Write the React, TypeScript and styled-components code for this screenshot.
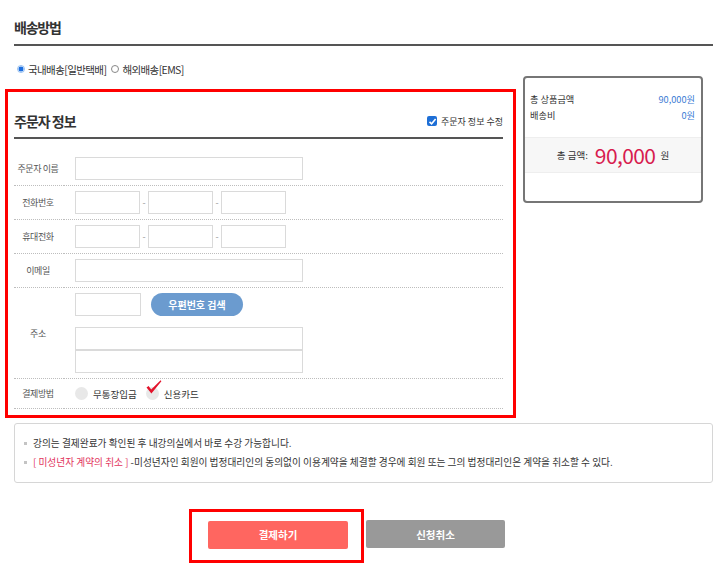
import styled, { createGlobalStyle } from 'styled-components';

const GlobalStyle = createGlobalStyle`
  * {
    box-sizing: border-box;
  }

  body {
    margin: 0;
    background: #fff;
    color: #333;
    font-family: "Noto Sans CJK KR", "Noto Sans", sans-serif;
  }
`;

const CheckGlyph = () => (
  <svg width="9" height="9" viewBox="0 0 9 9">
    <path d="M1.5 4.8 L3.6 6.8 L7.6 2" stroke="#fff" strokeWidth="1.6" fill="none" />
  </svg>
);

const App = () => {
  return (
    <StPage>
      <GlobalStyle />
      <StSectionTitle>배송방법</StSectionTitle>

      <StColumns>
        <StLeftCol>
          <StRadioRow>
            <StRadioOption>
              <StRadioDot $checked />
              국내배송[일반택배]
            </StRadioOption>
            <StRadioOption>
              <StRadioDot />
              해외배송[EMS]
            </StRadioOption>
          </StRadioRow>

          <StFormBox>
            <StFormHeader>
              <StFormTitle>주문자 정보</StFormTitle>
              <StEditCheck>
                <StCheckBox>
                  <CheckGlyph />
                </StCheckBox>
                주문자 정보 수정
              </StEditCheck>
            </StFormHeader>

            <StFormTable>
              <StRow>
                <StLabelCell>주문자 이름</StLabelCell>
                <StDataCell>
                  <StTextInput $w={228} />
                </StDataCell>
              </StRow>
              <StRow>
                <StLabelCell>전화번호</StLabelCell>
                <StDataCell>
                  <StTextInput $w={65} />
                  <StDash>-</StDash>
                  <StTextInput $w={65} />
                  <StDash>-</StDash>
                  <StTextInput $w={65} />
                </StDataCell>
              </StRow>
              <StRow>
                <StLabelCell>휴대전화</StLabelCell>
                <StDataCell>
                  <StTextInput $w={65} />
                  <StDash>-</StDash>
                  <StTextInput $w={65} />
                  <StDash>-</StDash>
                  <StTextInput $w={65} />
                </StDataCell>
              </StRow>
              <StRow>
                <StLabelCell>이메일</StLabelCell>
                <StDataCell>
                  <StTextInput $w={228} />
                </StDataCell>
              </StRow>
              <StRow>
                <StLabelCell>주소</StLabelCell>
                <StDataCell $stack>
                  <StZipLine>
                    <StTextInput $w={66} />
                    <StZipButton>우편번호 검색</StZipButton>
                  </StZipLine>
                  <StAddressStack>
                    <StTextInput $w={228} />
                    <StTextInput $w={228} />
                  </StAddressStack>
                </StDataCell>
              </StRow>
              <StRow>
                <StLabelCell>결제방법</StLabelCell>
                <StDataCell>
                  <StPayOption>
                    <StGrayRadio />
                    무통장입금
                  </StPayOption>
                  <StPayOption>
                    <StGrayRadio>
                      <StCheckMark width="16" height="14" viewBox="0 0 16 14">
                        <path d="M0.5 7.4 L2.6 6 L5.2 9.4 L14.6 0.3 L15.4 1.2 L5.4 13.4 Z" fill="#e3132b" />
                      </StCheckMark>
                    </StGrayRadio>
                    신용카드
                  </StPayOption>
                </StDataCell>
              </StRow>
            </StFormTable>
          </StFormBox>
        </StLeftCol>

        <StSummaryBox>
          <StSummaryRow>
            <span>총 상품금액</span>
            <StSummaryValue>90,000원</StSummaryValue>
          </StSummaryRow>
          <StSummaryRow>
            <span>배송비</span>
            <StSummaryValue>0원</StSummaryValue>
          </StSummaryRow>
          <StTotalBand>
            <StTotalLabel>총 금액:</StTotalLabel>
            <StTotalAmount>90,000</StTotalAmount>
            <StTotalLabel>원</StTotalLabel>
          </StTotalBand>
        </StSummaryBox>
      </StColumns>

      <StNoticeBox>
        <StNoticeLine>
          <StBullet />
          강의는 결제완료가 확인된 후 내강의실에서 바로 수강 가능합니다.
        </StNoticeLine>
        <StNoticeLine>
          <StBullet />
          <StHighlight>[ 미성년자 계약의 취소 ]</StHighlight>
          &nbsp;-미성년자인 회원이 법정대리인의 동의없이 이용계약을 체결할 경우에 회원 또는 그의 법정대리인은 계약을 취소할 수 있다.
        </StNoticeLine>
      </StNoticeBox>

      <StButtonRow>
        <StButtonFrame>
          <StActionButton $variant="pay">결제하기</StActionButton>
        </StButtonFrame>
        <StActionButton $variant="cancel">신청취소</StActionButton>
      </StButtonRow>
    </StPage>
  );
};

const StPage = styled.div`
  width: 722px;
  padding: 0 9px 20px 14px;
`;

const StSectionTitle = styled.h2`
  margin: 0;
  padding: 17px 0 7px;
  font-size: 14px;
  line-height: 20px;
  font-weight: 700;
  letter-spacing: -1.2px;
  color: #333;
  border-bottom: 2px solid #555;
`;

const StColumns = styled.div`
  display: flex;
  align-items: flex-start;
`;

const StLeftCol = styled.div`
  width: 511px;
  margin-left: -9px;
  padding-top: 16px;
`;

const StRadioRow = styled.div`
  display: flex;
  align-items: center;
  gap: 5px;
  padding-left: 12px;
  height: 14px;
`;

const StRadioOption = styled.label`
  display: flex;
  align-items: center;
  gap: 3px;
  font-size: 10.5px;
  letter-spacing: -0.6px;
  color: #333;
`;

const StRadioDot = styled.span<{ $checked?: boolean }>`
  width: 8px;
  height: 8px;
  border-radius: 50%;
  border: 1px solid ${(p) => (p.$checked ? '#9cc3f0' : '#888')};
  background: ${(p) => (p.$checked ? 'radial-gradient(circle, #1d6fe0 0 2.4px, #cfe2fa 2.6px)' : '#fff')};
`;

const StFormBox = styled.div`
  margin-top: 13px;
  border: 3px solid #f00;
  padding: 0 10px 6px 6px;
`;

const StFormHeader = styled.div`
  display: flex;
  align-items: center;
  justify-content: space-between;
  padding: 19px 0 6px;
  border-bottom: 2px solid #555;
`;

const StFormTitle = styled.h3`
  margin: 0;
  font-size: 14px;
  line-height: 20px;
  font-weight: 700;
  letter-spacing: -1px;
  color: #333;
`;

const StEditCheck = styled.label`
  display: flex;
  align-items: center;
  gap: 4px;
  font-size: 9px;
  color: #333;
`;

const StCheckBox = styled.span`
  display: flex;
  align-items: center;
  justify-content: center;
  width: 10px;
  height: 10px;
  border-radius: 2px;
  background: #1e6fd6;
`;

const StFormTable = styled.div`
  margin-top: 13px;
`;

const StRow = styled.div`
  display: flex;
`;

const StLabelCell = styled.div`
  width: 48px;
  flex-shrink: 0;
  display: flex;
  align-items: center;
  justify-content: center;
  font-size: 9px;
  letter-spacing: -0.4px;
  color: #555;
  border-bottom: 1px dotted #bdbdbd;
`;

const StDataCell = styled.div<{ $stack?: boolean }>`
  flex: 1;
  display: flex;
  flex-direction: ${(p) => (p.$stack ? 'column' : 'row')};
  align-items: ${(p) => (p.$stack ? 'flex-start' : 'center')};
  margin-left: 1px;
  padding: 5px 0 5px 12px;
  border-bottom: 1px dotted #bdbdbd;
`;

const StTextInput = styled.input<{ $w: number }>`
  width: ${(p) => p.$w}px;
  height: 23px;
  margin: 0;
  padding: 0 4px;
  border: 1px solid #dadada;
  outline: none;
  background: #fff;
`;

const StDash = styled.span`
  width: 8px;
  text-align: center;
  font-size: 9px;
  color: #999;
`;

const StZipLine = styled.div`
  display: flex;
  align-items: center;
`;

const StZipButton = styled.button`
  width: 92px;
  height: 23px;
  margin-left: 10px;
  border: none;
  border-radius: 12px;
  background: #6b9bcf;
  color: #fff;
  font-family: inherit;
  font-size: 10px;
  font-weight: 700;
`;

const StAddressStack = styled.div`
  display: flex;
  flex-direction: column;
  margin-top: 11px;
`;

const StPayOption = styled.label`
  display: flex;
  align-items: center;
  gap: 5px;
  height: 19px;
  margin-right: 9px;
  font-size: 9.5px;
  color: #333;
`;

const StGrayRadio = styled.span`
  position: relative;
  width: 13px;
  height: 13px;
  border-radius: 50%;
  background: #e8e8e8;
`;

const StCheckMark = styled.svg`
  position: absolute;
  left: 0;
  top: -7px;
`;

const StSummaryBox = styled.div`
  width: 180px;
  height: 127px;
  margin-left: 7px;
  margin-top: 30px;
  padding-top: 13px;
  border: 2px solid #767676;
  border-radius: 4px;
`;

const StSummaryRow = styled.div`
  display: flex;
  justify-content: space-between;
  padding: 0 6px 0 5px;
  font-size: 9.2px;
  line-height: 16px;
  color: #333;
`;

const StSummaryValue = styled.span`
  color: #3b7bd4;
`;

const StTotalBand = styled.div`
  display: flex;
  align-items: center;
  justify-content: center;
  height: 36px;
  margin-top: 14px;
  background: #f7f7f7;
  border-top: 1px solid #eee;
  border-bottom: 1px solid #eee;
`;

const StTotalLabel = styled.span`
  font-size: 9.5px;
  color: #333;
`;

const StTotalAmount = styled.span`
  margin: 0 5px 0 7px;
  font-size: 21px;
  line-height: 1;
  letter-spacing: -0.6px;
  color: #d71c4f;
`;

const StNoticeBox = styled.div`
  margin-top: 5px;
  padding: 10px 9px;
  border: 1px solid #d6d6d6;
  border-radius: 3px;
`;

const StNoticeLine = styled.p`
  display: flex;
  align-items: center;
  margin: 0;
  font-size: 9.7px;
  line-height: 19px;
  white-space: nowrap;
  color: #333;
`;

const StBullet = styled.span`
  width: 3px;
  height: 3px;
  margin-right: 6px;
  background: #c4c4c4;
`;

const StHighlight = styled.span`
  color: #e2345c;
`;

const StButtonRow = styled.div`
  display: flex;
  align-items: flex-start;
  margin: 26px 0 0 175px;
`;

const StButtonFrame = styled.div`
  padding: 8px 13px 11px 16px;
  border: 3px solid #f00;
`;

const StActionButton = styled.button<{ $variant: 'pay' | 'cancel' }>`
  width: ${(p) => (p.$variant === 'pay' ? 140 : 139)}px;
  height: 28px;
  margin: ${(p) => (p.$variant === 'pay' ? '0' : '11px 0 0 2px')};
  border: none;
  border-radius: 2px;
  background: ${(p) => (p.$variant === 'pay' ? '#ff6660' : '#999')};
  color: #fff;
  font-family: inherit;
  font-size: 10.5px;
  font-weight: 700;
`;

export default App;
